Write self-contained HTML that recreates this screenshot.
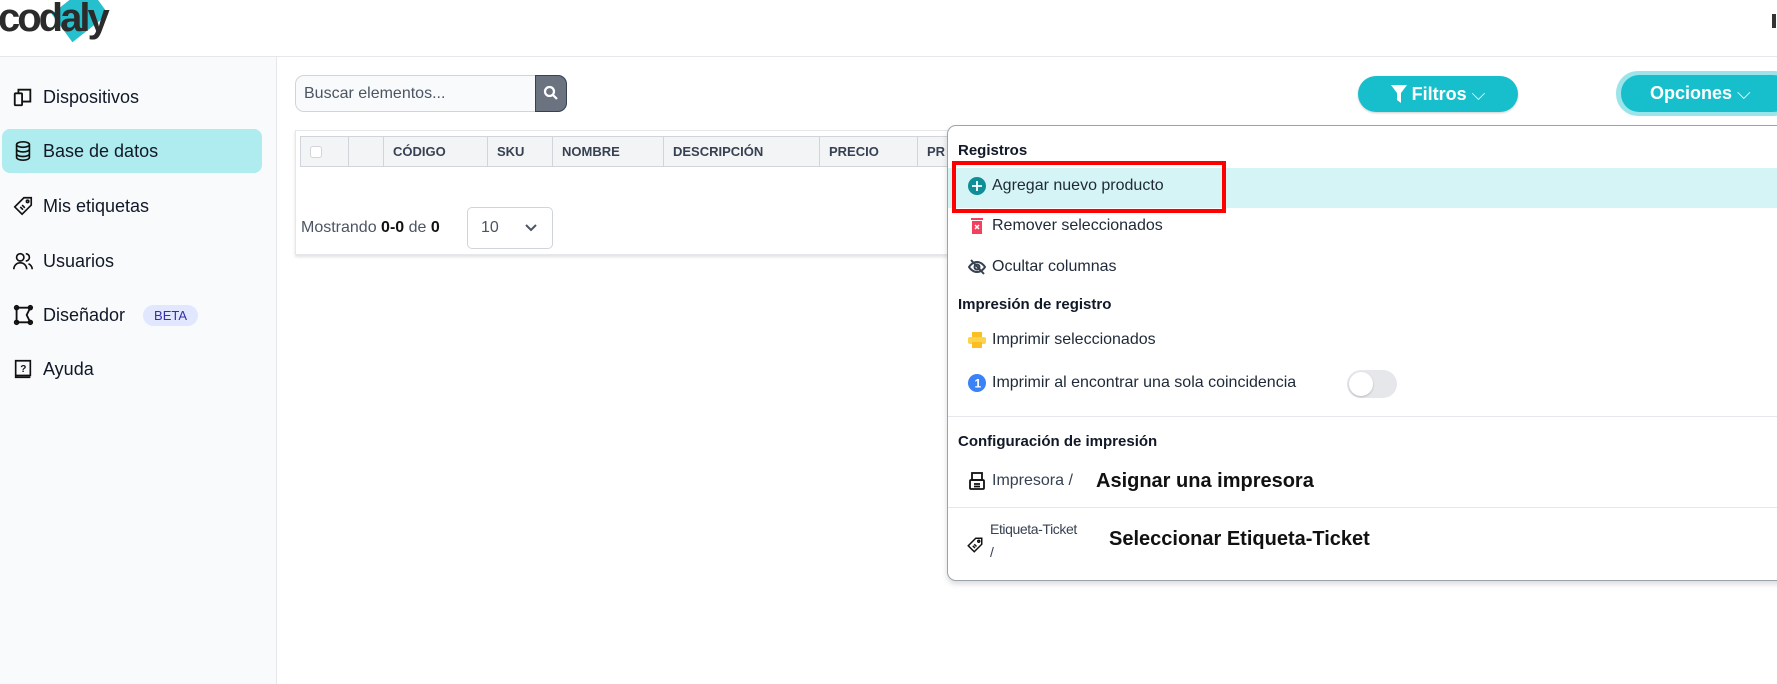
<!DOCTYPE html>
<html><head><meta charset="utf-8"><style>
*{box-sizing:border-box;margin:0;padding:0}
body{width:1777px;height:684px;overflow:hidden;background:#fff;font-family:"Liberation Sans",sans-serif;color:#111827;position:relative}
.abs{position:absolute}
.hdr{left:0;top:0;width:1777px;height:57px;border-bottom:1px solid #e5e7eb;background:#fff}
.side{left:0;top:57px;width:277px;height:627px;background:#f9fafb;border-right:1px solid #e5e7eb}
.nav{position:absolute;left:12px;font-size:18px;color:#111827;display:flex;align-items:center;gap:9px}
.nav svg{width:22px;height:22px}
.act{left:2px;top:129px;width:260px;height:44px;background:#aeecef;border-radius:8px}
.th{position:absolute;top:0;height:30px;border-right:1px solid #d1d5db;font-size:13px;font-weight:bold;color:#374151;line-height:30px;padding-left:9px}
.menu{left:947px;top:125px;width:840px;height:456px;background:#fff;border:1px solid #9ca3af;border-radius:9px;box-shadow:0 3px 6px rgba(0,0,0,.15)}
.mh{position:absolute;left:10px;font-size:15px;font-weight:bold;color:#111827}
.mi{position:absolute;left:20px;font-size:16px;color:#1f2937;display:flex;align-items:center;gap:6px}
.ic{width:18px;height:18px;display:inline-block}
</style></head><body>
<div class="abs hdr">
 <div class="abs" style="left:60px;top:-6px;width:40px;height:40px;background:#25bfce;transform:skewX(-15deg) rotate(45deg)"></div>
 <div class="abs" style="left:-2px;top:-4px;font-size:40px;font-weight:bold;color:#2b2b2b;letter-spacing:-3px">codaly</div>
 <div class="abs" style="left:1772px;top:14px;width:4px;height:14px;background:#333"></div>
</div>
<div class="abs side"></div>
<div class="abs act"></div>
<div class="nav" style="top:86px"><svg viewBox="0 0 24 24" fill="none" stroke="#111" stroke-width="2"><rect x="3" y="8" width="8" height="13" rx="1"/><path d="M7 8V4h13v13h-9"/></svg>Dispositivos</div>
<div class="nav" style="top:140px"><svg viewBox="0 0 24 24" fill="none" stroke="#111" stroke-width="1.8"><ellipse cx="12" cy="5" rx="7" ry="3"/><path d="M5 5v14c0 1.7 3 3 7 3s7-1.3 7-3V5M5 10c0 1.7 3 3 7 3s7-1.3 7-3M5 15c0 1.7 3 3 7 3s7-1.3 7-3"/></svg>Base de datos</div>
<div class="nav" style="top:195px"><svg viewBox="0 0 24 24" fill="none" stroke="#111" stroke-width="1.8"><path d="M13 3h8v8L11 21 3 13z"/><circle cx="17" cy="7" r="1.3"/><path d="M9 13l3 3M11 11l3 3"/></svg>Mis etiquetas</div>
<div class="nav" style="top:250px"><svg viewBox="0 0 24 24" fill="none" stroke="#111" stroke-width="1.8"><circle cx="9" cy="8" r="4"/><path d="M2 21c0-4 3-7 7-7s7 3 7 7M15 4a4 4 0 010 8M18 15c2 1 4 3 4 6"/></svg>Usuarios</div>
<div class="nav" style="top:304px"><svg viewBox="0 0 24 24" fill="none" stroke="#111" stroke-width="2"><path d="M5 4h15l-4 8 4 8H5z"/><circle cx="5" cy="4" r="2"/><circle cx="20" cy="4" r="2"/><circle cx="5" cy="20" r="2"/><circle cx="20" cy="20" r="2"/></svg>Diseñador<span style="margin-left:9px;background:#e0e7ff;color:#3730a3;font-size:13px;padding:3px 11px;border-radius:12px">BETA</span></div>
<div class="nav" style="top:358px"><svg viewBox="0 0 24 24" fill="none" stroke="#111" stroke-width="1.8"><path d="M4 3h16v16H4zM4 19v2h16"/><text x="9" y="15" font-size="11" font-weight="bold" fill="#111" stroke="none" font-family="Liberation Sans">?</text></svg>Ayuda</div>

<div class="abs" style="left:295px;top:75px;width:272px;height:37px;border:1px solid #d1d5db;border-radius:9px;background:#f9fafb;font-size:16px;color:#4b5563;line-height:35px;padding-left:8px">Buscar elementos...</div>
<div class="abs" style="left:535px;top:75px;width:32px;height:37px;background:#6b7280;border-radius:0 9px 9px 0;border:1px solid #374151"><svg viewBox="0 0 24 24" width="18" height="18" style="margin:8px 6px" fill="none" stroke="#fff" stroke-width="3"><circle cx="10" cy="10" r="6"/><path d="M15 15l5 5"/></svg></div>

<div class="abs" style="left:295px;top:130px;width:660px;height:125px;background:#fff;border:1px solid #e5e7eb;box-shadow:0 2px 3px rgba(0,0,0,.12)">
 <div class="abs" style="left:4px;top:5px;width:660px;height:31px;background:#f3f4f6;border:1px solid #d1d5db">
  <div class="th" style="left:0;width:48px"><span style="display:inline-block;width:12px;height:12px;border:1px solid #d1d5db;border-radius:3px;background:#fff;margin-top:9px"></span></div>
  <div class="th" style="left:48px;width:35px"></div>
  <div class="th" style="left:83px;width:104px">CÓDIGO</div>
  <div class="th" style="left:187px;width:65px">SKU</div>
  <div class="th" style="left:252px;width:111px">NOMBRE</div>
  <div class="th" style="left:363px;width:156px">DESCRIPCIÓN</div>
  <div class="th" style="left:519px;width:98px">PRECIO</div>
  <div class="th" style="left:617px;width:60px;border:0">PR</div>
 </div>
 <div class="abs" style="left:5px;top:88px;font-size:16px;color:#4b5563">Mostrando <b style="color:#111">0-0</b> de <b style="color:#111">0</b></div>
 <div class="abs" style="left:171px;top:76px;width:86px;height:42px;border:1px solid #d1d5db;border-radius:5px;font-size:16px;color:#4b5563;line-height:40px;padding-left:13px">10<svg class="abs" style="left:56px;top:15px" width="14" height="10" viewBox="0 0 14 10" fill="none" stroke="#4b5563" stroke-width="2"><path d="M2 2l5 5 5-5"/></svg></div>
</div>

<div class="abs" style="left:1358px;top:76px;width:160px;height:36px;background:#17bfcc;border-radius:18px;color:#fff;font-weight:bold;font-size:18px;line-height:36px;text-align:center;box-shadow:0 1px 2px rgba(0,0,0,.2)"><svg width="16" height="18" viewBox="0 0 16 18" style="vertical-align:-3px"><path d="M0 0h16l-6 8v10l-4-3V8z" fill="#fff"/></svg> Filtros <span style="font-weight:normal">⌵</span></div>
<div class="abs" style="left:1616px;top:71px;width:180px;height:45px;background:#9be5ea;border-radius:22px"></div>
<div class="abs" style="left:1621px;top:75px;width:170px;height:37px;background:#17bfcc;border-radius:18px;color:#fff;font-weight:bold;font-size:18px;line-height:37px;padding-left:29px">Opciones <span style="font-weight:normal">⌵</span></div>

<div class="abs menu">
 <div class="mh" style="top:16px">Registros</div>
 <div class="abs" style="left:0;top:42px;width:840px;height:40px;background:#d5f4f6"></div>
 <div class="abs" style="left:4px;top:35px;width:274px;height:52px;border:4px solid #ff0000"></div>
 <div class="mi" style="top:51px"><svg class="ic" viewBox="0 0 18 18"><circle cx="9" cy="9" r="9" fill="#0e8f98"/><path d="M9 4v10M4 9h10" stroke="#fff" stroke-width="1.8"/></svg>Agregar nuevo producto</div>
 <div class="mi" style="top:91px"><svg class="ic" viewBox="0 0 18 18"><rect x="3" y="1" width="12" height="2" fill="#f43f5e"/><rect x="4" y="4" width="10" height="13" fill="#f43f5e"/><path d="M7 8l4 4M11 8l-4 4" stroke="#fff" stroke-width="1.5"/></svg>Remover seleccionados</div>
 <div class="mi" style="top:132px"><svg class="ic" viewBox="0 0 18 18" fill="none" stroke="#374151" stroke-width="2"><path d="M1 9s3-5 8-5 8 5 8 5-3 5-8 5-8-5-8-5z"/><circle cx="9" cy="9" r="2.5"/><path d="M3 2l13 14"/></svg>Ocultar columnas</div>
 <div class="mh" style="top:170px">Impresión de registro</div>
 <div class="mi" style="top:205px"><svg class="ic" viewBox="0 0 18 18"><rect x="4" y="1" width="10" height="5" fill="#fbbf24"/><rect x="0" y="6" width="18" height="7" rx="2" fill="#fcd34d"/><rect x="4" y="11" width="10" height="6" fill="#fbbf24"/></svg>Imprimir seleccionados</div>
 <div class="mi" style="top:248px"><svg class="ic" viewBox="0 0 18 18"><circle cx="9" cy="9" r="9" fill="#3b82f6"/><text x="6.5" y="13.5" font-size="12" font-weight="bold" fill="#fff" font-family="Liberation Sans">1</text></svg>Imprimir al encontrar una sola coincidencia</div>
 <div class="abs" style="left:399px;top:244px;width:50px;height:28px;background:#e5e7eb;border-radius:14px"><div class="abs" style="left:2px;top:2px;width:24px;height:24px;border-radius:12px;background:#fff;box-shadow:0 1px 2px rgba(0,0,0,.2)"></div></div>
 <div class="abs" style="left:0;top:290px;width:840px;height:1px;background:#e5e7eb"></div>
 <div class="mh" style="top:307px">Configuración de impresión</div>
 <div class="mi" style="top:346px"><svg class="ic" viewBox="0 0 18 18" fill="none" stroke="#111" stroke-width="1.8"><rect x="4" y="1" width="10" height="7"/><rect x="2" y="8" width="14" height="9" rx="1"/><path d="M6 12h6M6 14.5h6"/></svg><span style="color:#374151">Impresora /</span></div>
 <b class="abs" style="left:148px;top:344px;font-size:20px;color:#111">Asignar una impresora</b>
 <div class="abs" style="left:0;top:381px;width:840px;height:1px;background:#e5e7eb"></div>
 <div class="abs" style="left:18px;top:402px;width:18px"><svg class="ic" viewBox="0 0 24 24" fill="none" stroke="#111" stroke-width="2" style="margin-top:8px"><path d="M13 3h8v8L11 21 3 13z"/><circle cx="17" cy="7" r="1.3"/><path d="M9 13l3 3M11 11l3 3"/></svg></div>
 <div class="abs" style="left:42px;top:392px;font-size:14px;letter-spacing:-0.4px;color:#374151;line-height:23px">Etiqueta-Ticket<br>/</div>
 <b class="abs" style="left:161px;top:402px;font-size:20px;color:#111">Seleccionar Etiqueta-Ticket</b>
</div>
</body></html>
